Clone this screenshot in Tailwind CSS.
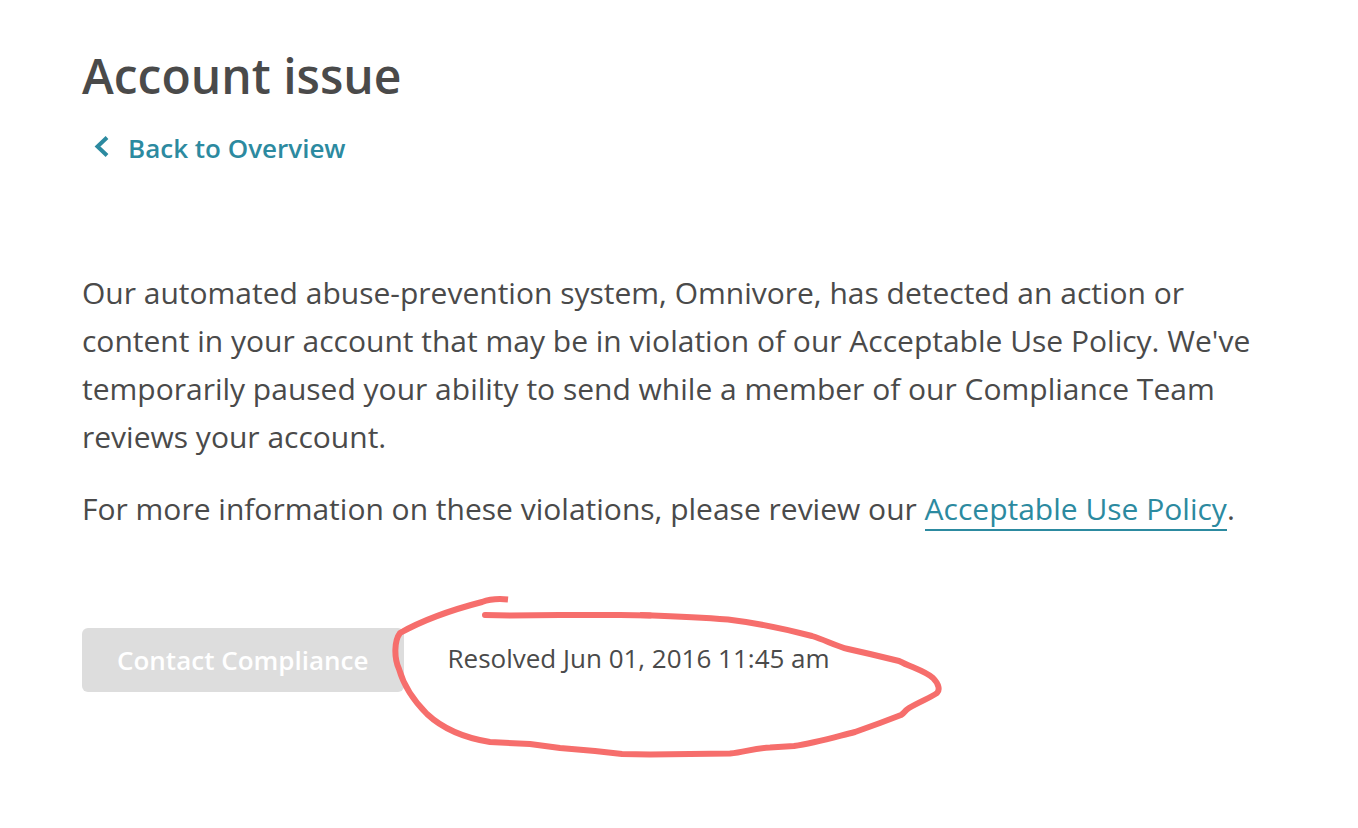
<!DOCTYPE html>
<html lang="en">
<head>
    <meta charset="utf-8">
    <meta name="viewport" content="width=device-width, initial-scale=1">
    <title>Account issue</title>
    <script src="https://cdn.jsdelivr.net/npm/@tailwindcss/browser@4"></script>
</head>
<body class="min-h-screen bg-white text-[#4a4a4a] font-['Open_Sans',sans-serif]">
    <main class="px-[82px] pt-11">
        <!-- Page heading -->
        <h1 class="text-5xl leading-16 font-semibold">Account issue</h1>
        <a href="#" class="mt-5 ml-3 inline-flex items-center gap-[18px] text-[26px] leading-10 font-semibold text-[#2c8aa0]">
            <svg class="w-4 h-6" viewBox="0 0 16 24" fill="none" stroke="currentColor" stroke-width="4" aria-hidden="true">
                <path d="M13 1.5 L3.5 10.5 L13 19.5"/>
            </svg>
            Back to Overview
        </a>

        <!-- Issue details -->
        <div class="mt-[101px] space-y-6 text-[30px] leading-12">
            <p>Our automated abuse-prevention system, Omnivore, has detected an action or content in your account that may be in violation of our Acceptable Use Policy. We've temporarily paused your ability to send while a member of our Compliance Team reviews your account.</p>
            <p>For more information on these violations, please review our <a href="#" class="border-b-2 border-[#2c8aa0] text-[#2c8aa0]">Acceptable Use Policy</a>.</p>
        </div>

        <!-- Status row -->
        <div class="relative mt-[95px] flex items-center gap-11">
            <button type="button" disabled class="h-16 rounded-md bg-[#dddddd] px-[35px] text-[26px] font-semibold text-white">Contact Compliance</button>
            <span class="pb-1 text-[26px]">Resolved Jun 01, 2016 11:45 am</span>
            <!-- Hand-drawn circle round the resolved date -->
            <svg class="absolute left-[308px] -top-[38px] w-[560px] h-[180px] pointer-events-none" viewBox="390 590 560 180" fill="none" stroke="#f66e6c" stroke-width="6" stroke-linejoin="round" aria-hidden="true">
                <path d="M508 599.5 C498 598.5 490 599 482 602 C455 609 423 620 400 633 C394 641 394 658 399 669 C403 683 412 699 427 714 C442 728 465 738 490 742 L530 744 L560 748 L595 751 L622 754 L650 754.500 L730 753.500 C745 752 755 748 770 747.500 L794 746 C815 743 835 737 855 732 L880 723 L901 715 C905 713 904 711 909 708 C919 702 932 697 937 693 C940 690 939 684 933 678 C925 671 913 668 899 661 L870 654 L848 649 C836 646 825 640 812 636 C785 629 757 623 728 619.500 C693 617 665 616 640 615"/>
                <path stroke-linecap="round" d="M485 615 L510 615.500 L560 615 L620 615 L650 615.500"/>
            </svg>
        </div>
    </main>
</body>
</html>
